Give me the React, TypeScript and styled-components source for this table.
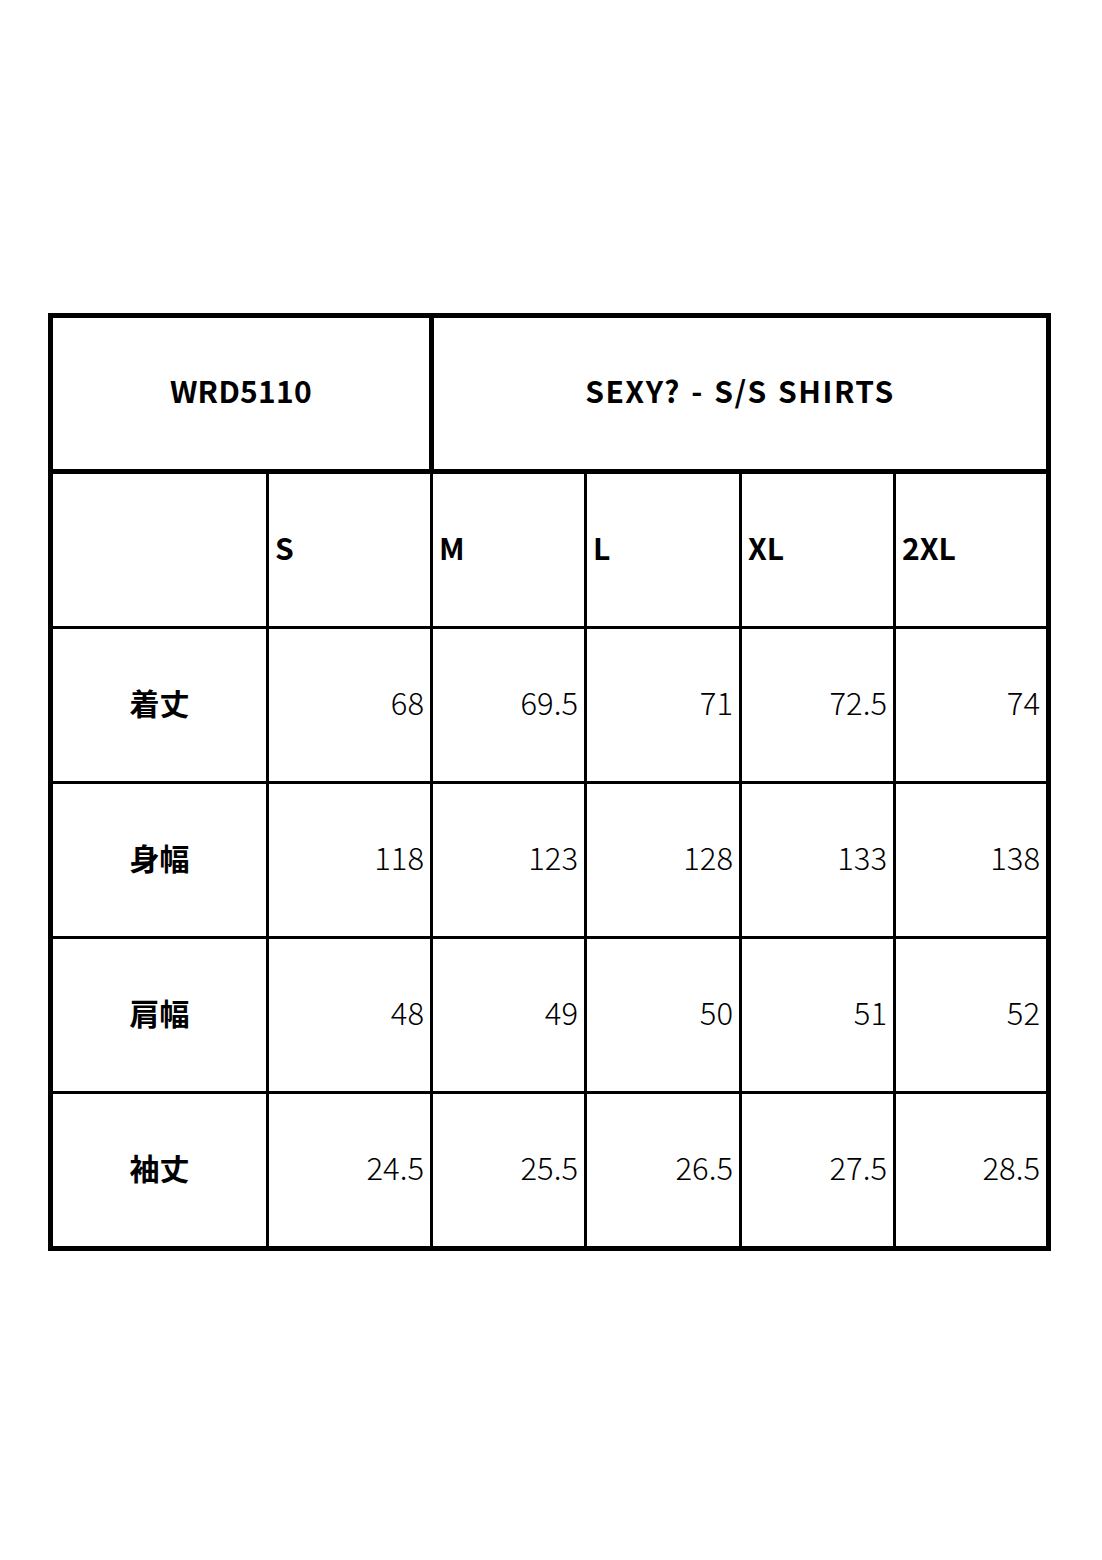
import styled, { createGlobalStyle } from "styled-components";

const GlobalStyle = createGlobalStyle`
  html, body {
    margin: 0;
    padding: 0;
    background: #fff;
  }
  body {
    font-family: "Noto Sans CJK JP", "Noto Sans", sans-serif;
    color: #000;
  }
`;

const sizes = ["S", "M", "L", "XL", "2XL"];

const rows = [
  { label: "着丈", values: ["68", "69.5", "71", "72.5", "74"] },
  { label: "身幅", values: ["118", "123", "128", "133", "138"] },
  { label: "肩幅", values: ["48", "49", "50", "51", "52"] },
  { label: "袖丈", values: ["24.5", "25.5", "26.5", "27.5", "28.5"] },
];

const App = () => {
  return (
    <>
      <GlobalStyle />
      <Page>
        <SizeTable>
          <HeaderRow>
            <TitleCell>WRD5110</TitleCell>
            <TitleCell $spaced>SEXY? - S/S SHIRTS</TitleCell>
          </HeaderRow>
          <BodyGrid>
            <LabelCell />
            {sizes.map((s) => (
              <SizeCell key={s}>{s}</SizeCell>
            ))}
            {rows.map((row) => (
              <Row key={row.label} label={row.label} values={row.values} />
            ))}
          </BodyGrid>
        </SizeTable>
      </Page>
    </>
  );
};

const Row = ({ label, values }: { label: string; values: string[] }) => (
  <>
    <LabelCell>{label}</LabelCell>
    {values.map((v, i) => (
      <ValueCell key={i}>{v}</ValueCell>
    ))}
  </>
);

export default App;

const Page = styled.div`
  width: 1102px;
  height: 1560px;
  box-sizing: border-box;
  padding: 313px 0 0 48px;
`;

const SizeTable = styled.div`
  width: 1003px;
  box-sizing: border-box;
  border: 5px solid #000;
  background: #000;
  display: flex;
  flex-direction: column;
  gap: 5px;
`;

const HeaderRow = styled.div`
  display: grid;
  grid-template-columns: 376px 612px;
  column-gap: 5px;
  height: 151px;
`;

const Cell = styled.div`
  background: #fff;
  display: flex;
  align-items: center;
  box-sizing: border-box;
  padding-bottom: 7px;
  font-size: 30px;
  line-height: 1;
  white-space: nowrap;
`;

const TitleCell = styled(Cell)<{ $spaced?: boolean }>`
  justify-content: center;
  font-weight: 700;
  letter-spacing: ${(p) => (p.$spaced ? "1.5px" : "0.3px")};
  word-spacing: ${(p) => (p.$spaced ? "2px" : "0")};
`;

const BodyGrid = styled.div`
  display: grid;
  grid-template-columns: 213px 161px 151px 152px 151px 150px;
  grid-auto-rows: 152px;
  gap: 3px;
`;

const LabelCell = styled(Cell)`
  justify-content: center;
  font-weight: 700;
`;

const SizeCell = styled(Cell)`
  justify-content: flex-start;
  padding-left: 6px;
  font-weight: 700;
`;

const ValueCell = styled(Cell)`
  justify-content: flex-end;
  padding-right: 6px;
  font-size: 31px;
  font-weight: 300;
`;
